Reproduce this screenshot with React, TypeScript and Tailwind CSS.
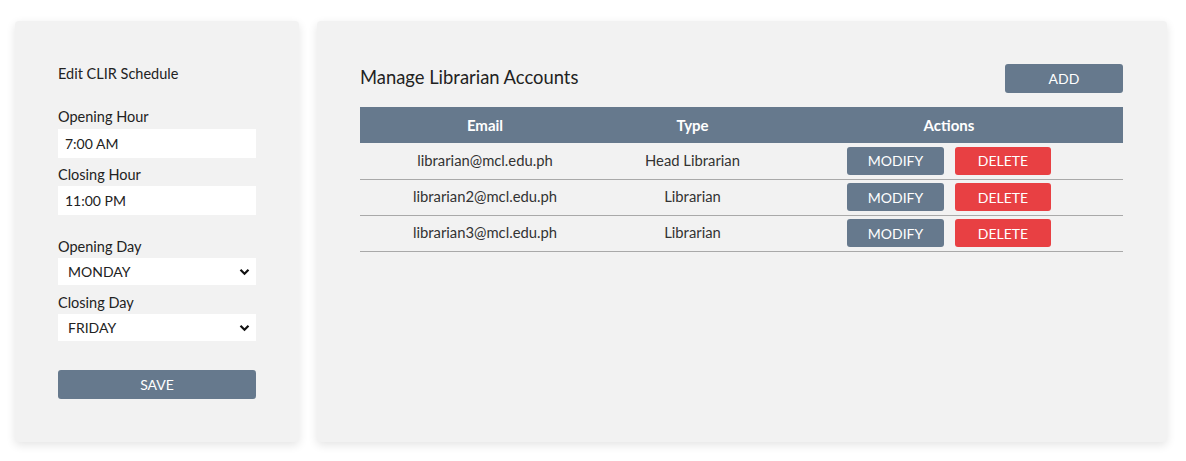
import React from 'react'

const accounts = [
  { email: 'librarian@mcl.edu.ph', type: 'Head Librarian' },
  { email: 'librarian2@mcl.edu.ph', type: 'Librarian' },
  { email: 'librarian3@mcl.edu.ph', type: 'Librarian' },
]

const Chevron = () => (
  <svg width="11" height="8" viewBox="0 0 11 8" className="absolute right-[6px] top-1/2 -translate-y-1/2 pointer-events-none" aria-hidden="true">
    <path d="M1.5 1.8 L5.5 5.8 L9.5 1.8" fill="none" stroke="#111" strokeWidth="2.2" />
  </svg>
)

function DaySelect({ value }: { value: string }) {
  return (
    <div className="relative mt-[2px]">
      <select
        defaultValue={value}
        className="w-full h-[27px] appearance-none bg-white pl-[10px] text-[14px] text-[#222] outline-none border-0 rounded-none"
      >
        {['MONDAY', 'TUESDAY', 'WEDNESDAY', 'THURSDAY', 'FRIDAY', 'SATURDAY', 'SUNDAY'].map(d => (
          <option key={d}>{d}</option>
        ))}
      </select>
      <Chevron />
    </div>
  )
}

export default function App() {
  return (
    <div className="min-h-screen bg-white font-['Lato','Noto_Sans',sans-serif] text-[#222]">
      <div className="flex gap-[18px] pl-[15px] pt-[21px]">
        {/* ── Schedule card ── */}
        <section className="w-[284px] h-[421px] rounded-[4px] bg-[#f2f2f2] shadow-[0_3px_10px_rgba(0,0,0,0.11)] pl-[43px] pr-[43px] pt-[45px] flex flex-col">
          <h2 className="text-[14.5px] leading-[16px]">Edit CLIR Schedule</h2>

          <label className="mt-[26px] text-[14.5px] leading-[18px]">Opening Hour</label>
          <input
            defaultValue="7:00 AM"
            className="mt-[3px] h-[29px] bg-white px-[7px] text-[14px] text-[#222] outline-none"
          />

          <label className="mt-[8px] text-[14.5px] leading-[18px]">Closing Hour</label>
          <input
            defaultValue="11:00 PM"
            className="mt-[2px] h-[29px] bg-white px-[7px] text-[14px] text-[#222] outline-none"
          />

          <label className="mt-[23px] text-[14.5px] leading-[18px]">Opening Day</label>
          <DaySelect value="MONDAY" />

          <label className="mt-[9px] text-[14.5px] leading-[18px]">Closing Day</label>
          <DaySelect value="FRIDAY" />

          <button className="mt-[29px] h-[29px] rounded-[3px] bg-[#66798d] text-white text-[14px]">
            SAVE
          </button>
        </section>

        {/* ── Accounts card ── */}
        <section className="w-[850px] h-[421px] rounded-[4px] bg-[#f2f2f2] shadow-[0_3px_10px_rgba(0,0,0,0.11)] pl-[43px] pr-[44px] pt-[43px]">
          <div className="flex items-center justify-between h-[29px]">
            <h1 className="text-[18.4px] leading-[22px] -mt-[4px]">Manage Librarian Accounts</h1>
            <button className="w-[118px] h-[29px] rounded-[3px] bg-[#66798d] text-white text-[14px]">
              ADD
            </button>
          </div>

          <table className="mt-[14px] w-full border-collapse text-[14.8px]">
            <thead>
              <tr className="h-[36px] bg-[#66798d] text-white">
                <th className="w-[250px] font-bold text-[15px]">Email</th>
                <th className="w-[165px] font-bold text-[15px]">Type</th>
                <th className="font-bold text-[15px]">Actions</th>
              </tr>
            </thead>
            <tbody>
              {accounts.map(a => (
                <tr key={a.email} className="h-[36px] border-b border-[#a9a9a9] text-[#333]">
                  <td className="text-center pb-[2px]">{a.email}</td>
                  <td className="text-center pb-[2px]">{a.type}</td>
                  <td>
                    <div className="flex justify-center gap-[11px] text-[14px]">
                      <button className="w-[97px] h-[28px] rounded-[3px] bg-[#66798d] text-white">
                        MODIFY
                      </button>
                      <button className="w-[96px] h-[28px] rounded-[3px] bg-[#e84043] text-white">
                        DELETE
                      </button>
                    </div>
                  </td>
                </tr>
              ))}
            </tbody>
          </table>
        </section>
      </div>
    </div>
  )
}
